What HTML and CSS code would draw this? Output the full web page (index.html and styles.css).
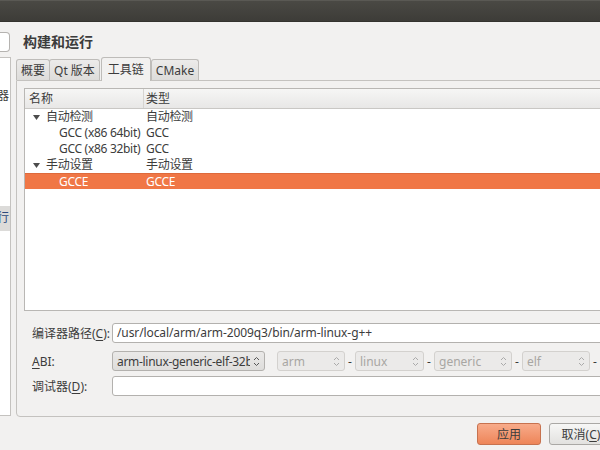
FILE: index.html
```html
<!DOCTYPE html>
<html lang="zh-CN">
<head>
    <meta charset="UTF-8">
    <title>选项 - 构建和运行</title>
    <link rel="stylesheet" href="styles.css">
</head>
<body>
    <div class="titlebar"></div>

    <div class="window">
        <aside class="sidebar">
            <div class="search"></div>
            <ul class="nav">
                <li>环境</li>
                <li>文本编辑器</li>
                <li>FakeVim</li>
                <li>帮助</li>
                <li>Qt4</li>
                <li>设计师</li>
                <li class="current">构建和运行</li>
                <li>调试器</li>
            </ul>
        </aside>

        <main class="main">
            <h1>构建和运行</h1>

            <div class="tabs">
                <div class="tab">概要</div>
                <div class="tab">Qt 版本</div>
                <div class="tab active">工具链</div>
                <div class="tab">CMake</div>
            </div>

            <div class="pane">
                <div class="tree">
                    <div class="tree-head">
                        <span class="col-name">名称</span>
                        <span class="col-type">类型</span>
                    </div>
                    <div class="row">
                        <span class="col-name"><svg class="arrow" width="7" height="5" viewBox="0 0 7 5"><path d="M0 0h7L3.5 5z" fill="#4c4c4c"/></svg>自动检测</span>
                        <span class="col-type">自动检测</span>
                    </div>
                    <div class="row child">
                        <span class="col-name">GCC (x86 64bit)</span>
                        <span class="col-type">GCC</span>
                    </div>
                    <div class="row child">
                        <span class="col-name">GCC (x86 32bit)</span>
                        <span class="col-type">GCC</span>
                    </div>
                    <div class="row">
                        <span class="col-name"><svg class="arrow" width="7" height="5" viewBox="0 0 7 5"><path d="M0 0h7L3.5 5z" fill="#4c4c4c"/></svg>手动设置</span>
                        <span class="col-type">手动设置</span>
                    </div>
                    <div class="row child selected">
                        <span class="col-name">GCCE</span>
                        <span class="col-type">GCCE</span>
                    </div>
                </div>

                <div class="form">
                    <div class="field">
                        <label>编译器路径(<u>C</u>):</label>
                        <div class="input">/usr/local/arm/arm-2009q3/bin/arm-linux-g++</div>
                    </div>
                    <div class="field abi">
                        <label><u>A</u>BI:</label>
                        <div class="combo main-combo"><span>arm-linux-generic-elf-32bit</span><svg width="7" height="11" viewBox="0 0 7 11"><path d="M1 4L3.5 1.5L6 4M1 7L3.5 9.5L6 7" fill="none" stroke="#555" stroke-width="1"/></svg></div>
                        <div class="combo off w-arm"><span>arm</span><svg width="7" height="11" viewBox="0 0 7 11"><path d="M1 4L3.5 1.5L6 4M1 7L3.5 9.5L6 7" fill="none" stroke="#aaa" stroke-width="1"/></svg></div>
                        <span class="dash">-</span>
                        <div class="combo off w-linux"><span>linux</span><svg width="7" height="11" viewBox="0 0 7 11"><path d="M1 4L3.5 1.5L6 4M1 7L3.5 9.5L6 7" fill="none" stroke="#aaa" stroke-width="1"/></svg></div>
                        <span class="dash">-</span>
                        <div class="combo off w-generic"><span>generic</span><svg width="7" height="11" viewBox="0 0 7 11"><path d="M1 4L3.5 1.5L6 4M1 7L3.5 9.5L6 7" fill="none" stroke="#aaa" stroke-width="1"/></svg></div>
                        <span class="dash">-</span>
                        <div class="combo off w-elf"><span>elf</span><svg width="7" height="11" viewBox="0 0 7 11"><path d="M1 4L3.5 1.5L6 4M1 7L3.5 9.5L6 7" fill="none" stroke="#aaa" stroke-width="1"/></svg></div>
                        <span class="dash">-</span>
                        <div class="combo off w-bits"></div>
                    </div>
                    <div class="field">
                        <label>调试器(<u>D</u>):</label>
                        <div class="input"></div>
                    </div>
                </div>
            </div>

            <div class="buttons">
                <button class="btn primary">应用</button>
                <button class="btn">取消(<u>C</u>)</button>
            </div>
        </main>
    </div>
</body>
</html>
```

FILE: styles.css
```css
body {
    margin: 0;
    width: 600px;
    height: 450px;
    overflow: hidden;
    background-color: #f2f1f0;
    color: #3c3c3c;
    font-family: "Noto Sans", "Noto Sans CJK SC", sans-serif;
    font-size: 12px;
}
u {
    text-decoration: underline;
    text-underline-offset: 2px;
}

/* window manager title bar */
.titlebar {
    height: 22px;
    box-sizing: border-box;
    border-top: 1px solid #5a5954;
    border-bottom: 1px solid #34332f;
    background: linear-gradient(#4a4944, #3d3c38);
}

.window {
    display: flex;
}

/* options category list, scrolled mostly out of view */
.sidebar {
    width: 11px;
    flex: none;
    overflow: hidden;
    padding-top: 10px;
}
.search {
    height: 20px;
    width: 10px;
    box-sizing: border-box;
    background: white;
    border: 1px solid #b5b3b0;
    border-left: none;
    border-radius: 0 4px 4px 0;
}
.nav {
    list-style: none;
    margin: 5px 0 0;
    padding: 1px 0;
    height: 359px;
    width: 11px;
    box-sizing: border-box;
    background: white;
    border: 1px solid #c4c2bf;
    border-left: none;
    overflow: hidden;
}
.nav li {
    height: 24.5px;
    line-height: 24.5px;
    white-space: nowrap;
    text-indent: -51px;
}
.nav li.current {
    background: #dcdbd9;
    color: #2d4a7c;
}

.main {
    flex: none;
    width: 600px;
    margin-left: 5px;
    padding-top: 10px;
}
h1 {
    margin: 0 0 5px;
    padding-left: 7px;
    height: 20px;
    line-height: 20px;
    font-size: 14px;
    font-weight: bold;
    color: #3c3c3c;
}

/* tab bar */
.tabs {
    display: flex;
    align-items: flex-end;
    height: 23px;
}
.tab {
    height: 21px;
    line-height: 21px;
    padding: 0 4px;
    box-sizing: border-box;
    background: linear-gradient(#ecebea, #dddcda);
    border: 1px solid #bebcb9;
    border-bottom: none;
    border-radius: 3px 3px 0 0;
    margin-right: -1px;
}
.tab.active {
    height: 24px;
    line-height: 23px;
    margin: 0 0 -1px 2px;
    padding: 0 6px;
    background: #f2f1f0;
    position: relative;
}

.pane {
    border: 1px solid #c4c2bf;
    border-radius: 0 0 0 4px;
    padding: 7px 0 20px 7px;
}

/* tool chain tree */
.tree {
    height: 223px;
    box-sizing: border-box;
    background: white;
    border: 1px solid #b9b7b4;
    border-right: none;
}
.tree-head {
    display: flex;
    height: 20px;
    line-height: 20px;
    box-sizing: border-box;
    background: linear-gradient(#f6f6f5, #e8e7e6);
    border-bottom: 1px solid #c9c7c4;
}
.tree-head .col-name {
    border-right: 1px solid #d6d4d1;
}
.col-name {
    width: 114px;
    padding-left: 4px;
    flex: none;
    white-space: nowrap;
}
.col-type {
    padding-left: 2px;
}
.row {
    display: flex;
    height: 16px;
    line-height: 16px;
    letter-spacing: -0.3px;
}
.row .col-name {
    width: 119px;
    padding-left: 7px;
    box-sizing: border-box;
    overflow: hidden;
}
.arrow {
    margin: 0 6px 1px 1px;
    vertical-align: middle;
}
.row.child .col-name {
    padding-left: 34px;
}
.row.selected {
    background: #f07746;
    color: white;
    border-top: 1px solid #de6a3c;
    height: 15px;
    line-height: 15px;
}

/* compiler settings form */
.form {
    padding: 12px 11px 0 8px;
}
.field {
    display: flex;
    align-items: center;
    height: 20px;
}
.field + .field {
    margin-top: 8px;
}
.field:last-child {
    margin-top: 5px;
}
label {
    width: 80px;
    flex: none;
    white-space: nowrap;
}
.input {
    flex: 1;
    height: 20px;
    line-height: 18px;
    box-sizing: border-box;
    padding: 0 4px;
    background: white;
    border: 1px solid #b3b1ae;
    border-radius: 3px;
    white-space: nowrap;
    overflow: hidden;
    letter-spacing: -0.1px;
}
.combo {
    display: flex;
    align-items: center;
    height: 20px;
    box-sizing: border-box;
    padding: 0 4px;
    border: 1px solid #b3b1ae;
    border-radius: 3px;
    background: linear-gradient(#eae9e8, #dedddb);
    flex: none;
    overflow: hidden;
    white-space: nowrap;
}
.combo span {
    flex: 1;
    overflow: hidden;
}
.combo svg {
    flex: none;
    margin-left: 3px;
}
.main-combo {
    width: 153px;
    margin-right: 12px;
    letter-spacing: -0.3px;
}
.combo.off {
    color: #a8a6a3;
    background: #ebeae9;
    border-color: #d3d1ce;
}
.w-arm { width: 68px; }
.w-linux { width: 69px; }
.w-generic { width: 78px; }
.w-elf { width: 68px; }
.w-bits { width: 40px; }
.dash {
    width: 10px;
    text-align: center;
    flex: none;
}

/* dialog buttons */
.buttons {
    display: flex;
    justify-content: flex-end;
    gap: 8px;
    margin-top: 6px;
    padding-right: 3px;
}
.btn {
    width: 64px;
    height: 22px;
    padding: 0;
    font: inherit;
    color: #3c3c3c;
    background: linear-gradient(#f7f7f6, #e2e1df);
    border: 1px solid #aaa8a5;
    border-radius: 3px;
}
.btn.primary {
    background: linear-gradient(#f8ab8a, #ee8559);
    border-color: #c7724f;
}
```
